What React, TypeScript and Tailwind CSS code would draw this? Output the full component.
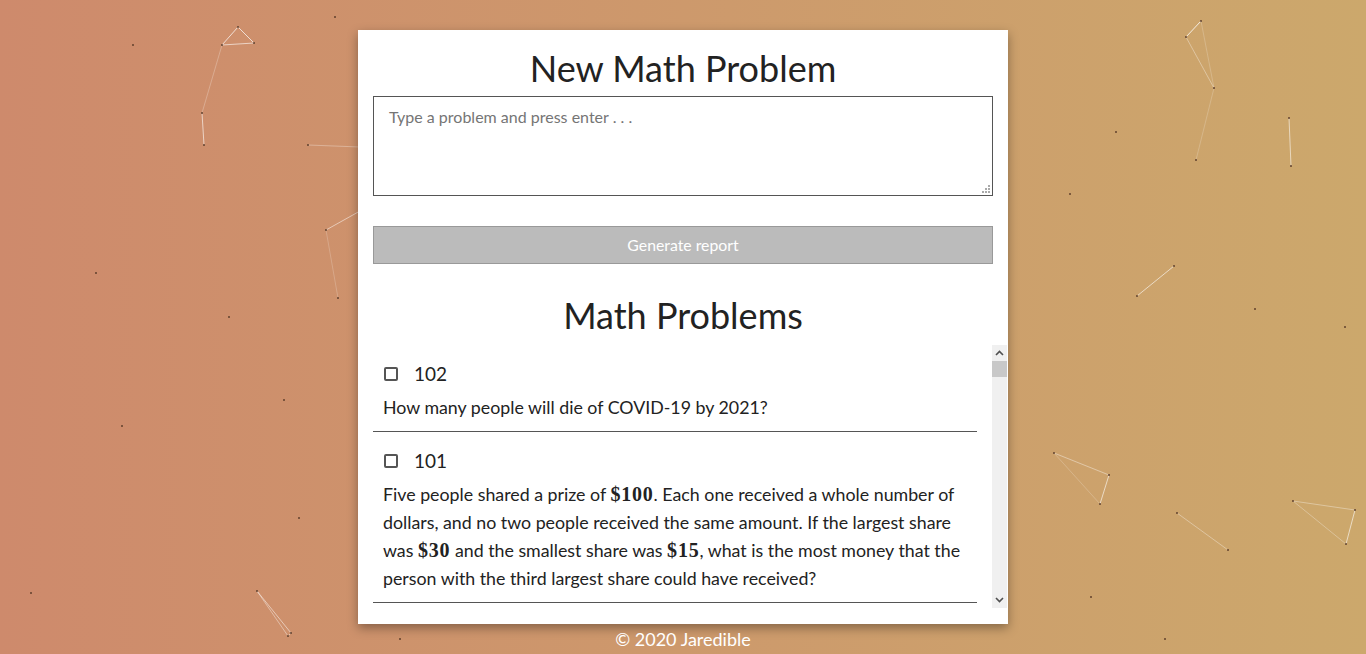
import React from 'react';

const font = { fontFamily: 'Lato, "Open Sans", sans-serif' };

// particle dots scattered on the canvas
const dots: [number, number][] = [
  [335, 17], [133, 45], [238, 27], [222, 45], [254, 43], [202, 113], [204, 145],
  [308, 145], [326, 230], [338, 298], [96, 273], [229, 317], [284, 400], [122, 426],
  [299, 518], [31, 593], [257, 591], [291, 633], [288, 636], [400, 639],
  [1201, 21], [1186, 37], [1214, 88], [1196, 160], [1116, 132], [1070, 194],
  [1289, 118], [1291, 166], [1174, 266], [1137, 296], [1255, 309], [1345, 327],
  [1054, 453], [1109, 475], [1100, 504], [1177, 513], [1228, 550], [1293, 501],
  [1355, 510], [1346, 544], [1091, 597], [1165, 639],
];

// connecting lines: x1, y1, x2, y2, opacity
const lines: [number, number, number, number, number][] = [
  [238, 27, 222, 45, 0.7], [238, 27, 254, 43, 0.7], [222, 45, 254, 43, 0.6],
  [222, 45, 202, 113, 0.25], [202, 113, 204, 145, 0.6],
  [308, 145, 360, 147, 0.3], [326, 230, 360, 211, 0.5], [326, 230, 338, 298, 0.2],
  [257, 591, 291, 633, 0.5], [257, 591, 288, 636, 0.4], [291, 633, 288, 636, 0.5],
  [1201, 21, 1186, 37, 0.8], [1186, 37, 1214, 88, 0.35], [1201, 21, 1214, 88, 0.2],
  [1214, 88, 1196, 160, 0.2], [1289, 118, 1291, 166, 0.55], [1174, 266, 1137, 296, 0.6],
  [1054, 453, 1109, 475, 0.4], [1109, 475, 1100, 504, 0.6], [1054, 453, 1100, 504, 0.2],
  [1177, 513, 1228, 550, 0.35], [1293, 501, 1355, 510, 0.35], [1355, 510, 1346, 544, 0.6],
  [1293, 501, 1346, 544, 0.3],
];

const Particles = () => (
  <svg className="absolute inset-0 pointer-events-none" width="1366" height="654">
    {lines.map(([x1, y1, x2, y2, o], i) => (
      <line key={i} x1={x1} y1={y1} x2={x2} y2={y2} stroke="#ffffff" strokeOpacity={o} strokeWidth="1" />
    ))}
    {dots.map(([x, y], i) => (
      <rect key={i} x={x - 1} y={y - 1} width="2" height="2" fill="#5a3a28" fillOpacity="0.7" />
    ))}
  </svg>
);

const Money = ({ v }: { v: string }) => (
  <span className="font-bold text-[20px] leading-none tracking-[0.8px]" style={{ fontFamily: '"Liberation Serif", serif' }}>{v}</span>
);

const Checkbox = () => (
  <div className="w-[14px] h-[14px] border-2 border-[#555] rounded-[2px] bg-white shrink-0" />
);

const Item: React.FC<{ id: number; children: React.ReactNode }> = ({ id, children }) => (
  <div className="mr-[15px] border-b border-[#555] pt-[16px] pb-[10px] px-[10px]">
    <div className="flex items-center h-[26px] gap-[16px] pl-[1px]">
      <Checkbox />
      <span className="text-[19px] text-[#222]">{id}</span>
    </div>
    <p className="mt-[6px] text-[17.8px] leading-[28px] text-[#222]">{children}</p>
  </div>
);

const Chevron = ({ up }: { up?: boolean }) => (
  <svg width="9" height="6" viewBox="0 0 9 6" className="text-[#505050]">
    <path d={up ? 'M1 5 L4.5 1.5 L8 5' : 'M1 1 L4.5 4.5 L8 1'} stroke="currentColor" strokeWidth="1.6" fill="none" />
  </svg>
);

// dotted resize grip in the textarea corner
const Grip = () => (
  <svg className="absolute right-[3px] bottom-[3px] pointer-events-none" width="8" height="8" viewBox="0 0 8 8">
    <rect x="6" y="0" width="2" height="2" fill="#aaa" />
    <rect x="3" y="3" width="2" height="2" fill="#aaa" />
    <rect x="6" y="3" width="2" height="2" fill="#aaa" />
    <rect x="0" y="6" width="2" height="2" fill="#aaa" />
    <rect x="3" y="6" width="2" height="2" fill="#aaa" />
    <rect x="6" y="6" width="2" height="2" fill="#aaa" />
  </svg>
);

export default function App() {
  return (
    <div
      className="relative w-full h-[654px] overflow-hidden bg-[linear-gradient(to_right,#ce8a6c,#cca86c)]"
      style={font}
    >
      <Particles />
      <div className="relative flex flex-col items-center pt-[30px]">
        <div className="w-[650px] bg-white px-[15px] pb-[16px] shadow-[0_4px_10px_rgba(0,0,0,0.35)]">
          <h1 className="text-center text-[36px] leading-[46px] mt-[15px] text-[#222]">New Math Problem</h1>
          <div className="relative mt-[5px]">
            <textarea
              className="block w-full h-[100px] border border-[#555] px-[15px] py-[8px] text-[16px] text-[#222] placeholder:text-[#757575] outline-none resize-none"
              placeholder="Type a problem and press enter . . ."
            />
            <Grip />
          </div>
          <button className="block w-full h-[38px] mt-[30px] bg-[#bbbbbb] border border-[#999] text-white text-[15.8px]">
            Generate report
          </button>
          <h2 className="text-center text-[36px] leading-[46px] mt-[28px] text-[#222]">Math Problems</h2>
          <div className="flex h-[263px] mt-[7px] -mr-[14px]">
            <div className="flex-1 overflow-hidden">
              <Item id={102}>How many people will die of COVID-19 by 2021?</Item>
              <Item id={101}>
                Five people shared a prize of <Money v="$100" />. Each one received a whole number of dollars,
                and no two people received the same amount. If the largest share was <Money v="$30" /> and the
                smallest share was <Money v="$15" />, what is the most money that the person with the third
                largest share could have received?
              </Item>
            </div>
            <div className="w-[15px] bg-[#f0f0f0] flex flex-col items-center">
              <div className="h-[16px] flex items-center justify-center"><Chevron up /></div>
              <div className="w-full h-[16px] bg-[#c8c8c8]" />
              <div className="flex-1" />
              <div className="h-[16px] flex items-center justify-center"><Chevron /></div>
            </div>
          </div>
        </div>
        <div className="text-white text-[18px] leading-[30px]">© 2020 Jaredible</div>
      </div>
    </div>
  );
}
